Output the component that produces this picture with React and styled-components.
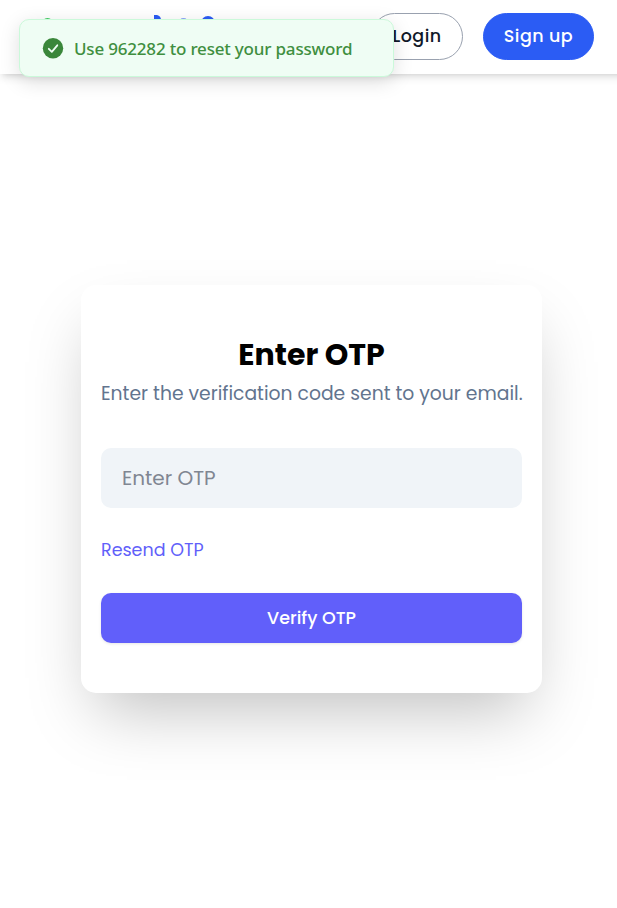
import React from 'react';
import styled, { createGlobalStyle } from 'styled-components';

const Global = createGlobalStyle`
  *, *::before, *::after { box-sizing: border-box; }
  body { margin: 0; background: #fff; font-family: Poppins, "Open Sans", sans-serif; }
`;
const Page = styled.div`
  height: 908px;
  display: flex;
  flex-direction: column;
  overflow: hidden;
`;
const Header = styled.header`
  width: calc(100% + 15px);
  height: 74px;
  display: flex;
  align-items: flex-start;
  padding: 13px 38px 14px 35px;
  background: #fff;
  box-shadow: 0 5px 7.5px -1.25px rgba(0, 0, 0, 0.1), 0 2.5px 5px -2.5px rgba(0, 0, 0, 0.1);
`;
const Logo = styled.svg`
  width: 190px;
  height: 47px;
  margin-right: auto;
`;
const Actions = styled.nav`
  display: flex;
  gap: 20px;
`;
const Pill = styled.button`
  width: ${(p) => (p.$primary ? 111 : 92)}px;
  height: 47px;
  border-radius: 24px;
  border: 1px solid ${(p) => (p.$primary ? '#2b5cf4' : '#99a1af')};
  background: ${(p) => (p.$primary ? '#2b5cf4' : '#fff')};
  color: ${(p) => (p.$primary ? '#fff' : '#101828')};
  font: 500 17.5px Poppins, "Open Sans", sans-serif;
  letter-spacing: 0.45px;
  padding: 0 0 2px;
`;
const Toast = styled.div`
  position: absolute;
  top: 19px;
  left: 19px;
  width: 375px;
  height: 58px;
  display: flex;
  align-items: center;
  gap: 10.5px;
  padding: 0 21.5px;
  border: 1px solid #cbf9da;
  border-radius: 10px;
  background: #effdf4;
  color: #3f8f3f;
  box-shadow: 0 5px 20px rgba(0, 0, 0, 0.13);
  font: 500 17px "Segoe UI", "Noto Sans", sans-serif;
  letter-spacing: -0.19px;
  white-space: nowrap;
`;
const ToastIcon = styled.svg`
  width: 22px;
  height: 22px;
  flex: none;
`;
const Main = styled.main`
  display: flex;
  justify-content: center;
  padding: 211px 0 0 6px;
`;
const Card = styled.section`
  width: 461px;
  height: 408px;
  display: flex;
  flex-direction: column;
  padding: 50px 20px;
  border-radius: 15px;
  background: #fff;
  box-shadow: 0 31px 62px -15px rgba(0, 0, 0, 0.25);
`;
const Title = styled.h1`
  margin: 0;
  font-size: 30px;
  line-height: 40px;
  text-align: center;
`;
const Subtitle = styled.p`
  margin: 5px 0 0;
  color: #62748e;
  font-size: 18.75px;
  line-height: 27px;
  text-align: center;
  white-space: nowrap;
`;
const OtpInput = styled.input`
  height: 60px;
  margin-top: 41px;
  padding: 0 20px 0 21px;
  border: 0;
  border-radius: 10px;
  background: #f0f4f8;
  font: 400 20px Poppins, "Open Sans", sans-serif;
  &::placeholder { color: #808692; opacity: 1; }
`;
const Resend = styled.a`
  align-self: flex-start;
  margin-top: 29px;
  color: #615ffa;
  font-size: 17.5px;
  line-height: 26px;
`;
const Verify = styled.button`
  height: 50px;
  margin-top: 30px;
  border: 0;
  border-radius: 10px;
  background: #615ffa;
  color: #fff;
  font: 500 17.5px Poppins, "Open Sans", sans-serif;
  box-shadow: 0 1px 3px rgba(0, 0, 0, 0.1);
`;

export default function App() {
  return (
    <Page>
      <Global />
      <Header>
        <Logo viewBox="35 13 190 47" aria-hidden="true">
          <circle cx="47.5" cy="24" r="6" fill="#3ecb60" />
          <path d="M154 15h3q4 1 4 5h-7z" fill="#2b5cf4" />
          <circle cx="183.500" cy="23" r="5" fill="#8aa5fa" />
          <circle cx="208" cy="23" r="7" fill="#2b5cf4" />
        </Logo>
        <Actions>
          <Pill>Login</Pill>
          <Pill $primary>Sign up</Pill>
        </Actions>
      </Header>
      <Toast role="status">
        <ToastIcon viewBox="0 0 22 22" aria-hidden="true">
          <circle cx="11" cy="11.3" r="10.200" fill="#3a873a" />
          <path d="M6.800 11.800l3 3 5.500-6.500" fill="none" stroke="#effdf4" strokeWidth="1.800" strokeLinecap="round" strokeLinejoin="round" />
        </ToastIcon>
        Use 962282 to reset your password
      </Toast>
      <Main>
        <Card>
          <Title>Enter OTP</Title>
          <Subtitle>Enter the verification code sent to your email.</Subtitle>
          <OtpInput placeholder="Enter OTP" />
          <Resend>Resend OTP</Resend>
          <Verify>Verify OTP</Verify>
        </Card>
      </Main>
    </Page>
  );
}
